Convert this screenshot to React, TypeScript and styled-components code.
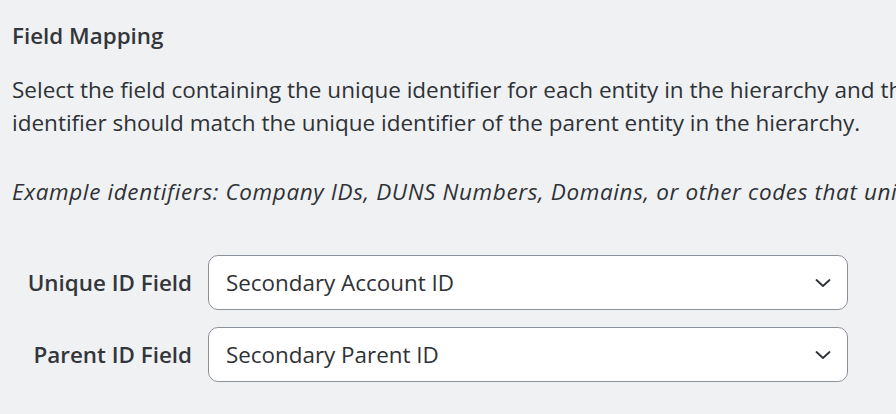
import styled, { createGlobalStyle } from "styled-components";

const GlobalStyle = createGlobalStyle`
  html, body {
    margin: 0;
    padding: 0;
    background-color: #f0f1f3;
    overflow: hidden;
  }
  body {
    font-family: "Open Sans", "Noto Sans", sans-serif;
    color: #2e3136;
  }
`;

const Section = styled.section`
  width: 1200px;
  padding: 22px 12px 0px 12px;
`;

const Title = styled.h2`
  margin: 0;
  font-size: 22.4px;
  font-weight: 600;
  line-height: 28px;
  color: #33363b;
`;

const Text = styled.p<{ italic?: boolean }>`
  margin: 0;
  font-size: 22.5px;
  line-height: 33px;
  white-space: nowrap;
  font-style: ${(props) => (props.italic ? "italic" : "normal")};
  letter-spacing: ${(props) => (props.italic ? "0.62px" : "0px")};
`;

const Intro = styled(Text)`
  margin-top: 23px;
`;

const Example = styled(Text)`
  margin-top: 36px;
`;

const Fields = styled.div`
  display: grid;
  grid-template-columns: 180px 640px;
  column-gap: 16px;
  row-gap: 17px;
  align-items: center;
  margin-top: 47px;
`;

const Label = styled.label`
  text-align: right;
  font-size: 22.4px;
  font-weight: 600;
  color: #33363b;
`;

const Select = styled.div`
  height: 55px;
  box-sizing: border-box;
  display: flex;
  align-items: center;
  justify-content: space-between;
  padding: 0px 16px 0px 17px;
  background-color: #ffffff;
  border: 1px solid #8c929a;
  border-radius: 10px;
  font-size: 22.4px;
  color: #2e3136;
`;

const Chevron = () => (
  <svg width="16" height="16" viewBox="0 0 16 16" fill="none">
    <path
      d="M1.5 5L8 11L14.5 5"
      stroke="#2e3136"
      strokeWidth="1.8"
      strokeLinecap="round"
      strokeLinejoin="round"
    />
  </svg>
);

const fields = [
  { label: "Unique ID Field", value: "Secondary Account ID" },
  { label: "Parent ID Field", value: "Secondary Parent ID" },
];

const App: React.FC = () => {
  return (
    <>
      <GlobalStyle />
      <Section>
        <Title>Field Mapping</Title>
        <Intro>
          Select the field containing the unique identifier for each entity in
          the hierarchy and the field containing the parent's
          <br />
          identifier should match the unique identifier of the parent entity in
          the hierarchy.
        </Intro>
        <Example italic>
          Example identifiers: Company IDs, DUNS Numbers, Domains, or other
          codes that uniquely identify each entity.
        </Example>
        <Fields>
          {fields.map((field) => (
            <>
              <Label key={field.label + "-label"}>{field.label}</Label>
              <Select key={field.label + "-select"}>
                <span>{field.value}</span>
                <Chevron />
              </Select>
            </>
          ))}
        </Fields>
      </Section>
    </>
  );
};

export default App;
